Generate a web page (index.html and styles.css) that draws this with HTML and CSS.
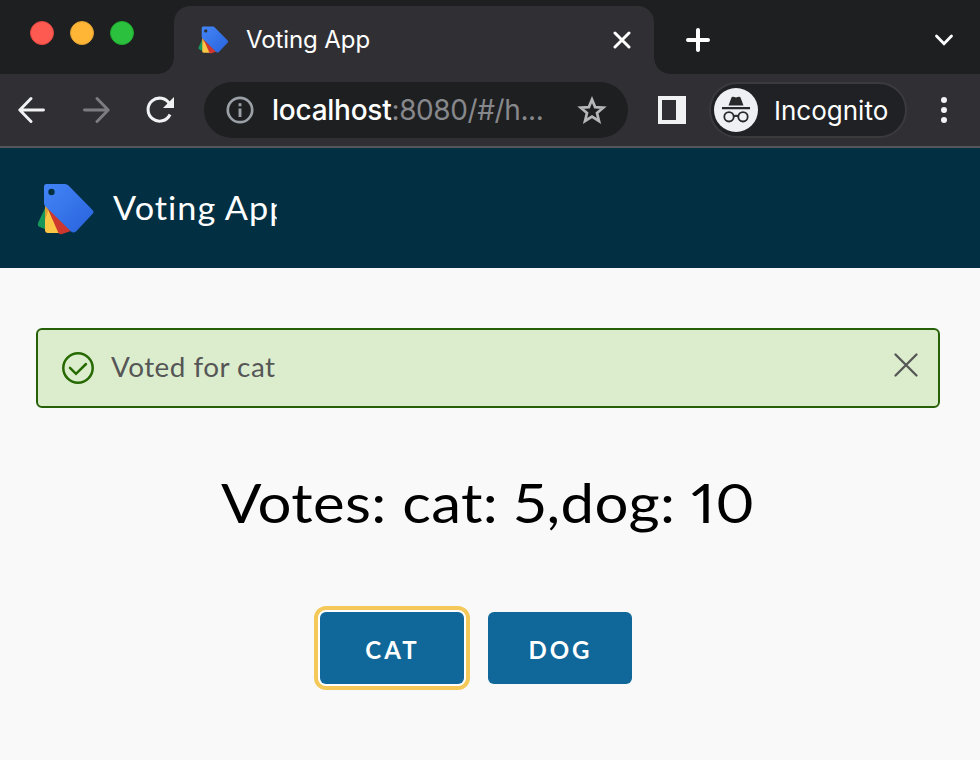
FILE: index.html
```html
<!DOCTYPE html>
<html lang="en">
<head>
<meta charset="utf-8">
<title>Voting App</title>
<link rel="stylesheet" href="styles.css">
</head>
<body>
<svg class="defs" width="0" height="0">
  <defs>
    <linearGradient id="blue" x1="0" y1="0" x2="1" y2="1"><stop offset="0" stop-color="#4285f7"/><stop offset="1" stop-color="#2962dc"/></linearGradient>
    <symbol id="tags" viewBox="0 0 58 54">
      <path fill="#17975a" d="M9 23 1 40q-1 3 2 4l7 3z"/>
      <path fill="#fbc545" d="M8 23v24q0 3 3 3h15L10 24z"/>
      <path fill="#d9a036" d="M8 23v14l4-12z"/>
      <path fill="#cd372e" d="m10 24 11 25q1 3 4 2l9-3z"/>
      <path fill="url(#blue)" fill-rule="evenodd" d="M9.500 1H28q2 0 3.500 1.500L55.500 27q2 2 0 4L39 48.500q-2.500 2-5 0L8 23q-1-1-1-3V4q0-3 2.500-3zM14.500 5.800a3.200 3.200 0 1 0 0 6.400 3.200 3.200 0 0 0 0-6.400z"/>
    </symbol>
  </defs>
</svg>
<div class="tabs">
  <div class="lights"><i class="red"></i><i class="amber"></i><i class="green"></i></div>
  <div class="tab">
    <svg class="favicon" width="31" height="29"><use href="#tags"/></svg>
    <span class="tab-title">Voting App</span>
    <svg class="tab-close" width="18" height="18" viewBox="0 0 18 18"><path d="m2 2 14 14M16 2 2 16" stroke="#fff" stroke-width="3" stroke-linecap="round"/></svg>
  </div>
  <svg class="plus" width="24" height="24" viewBox="0 0 24 24"><path d="M12 2v20M2 12h20" stroke="#fff" stroke-width="4" stroke-linecap="round"/></svg>
  <svg class="chevron" width="20" height="12" viewBox="0 0 20 12"><path d="m2.500 2 7.500 7.700L17.500 2" fill="none" stroke="#fff" stroke-width="2.800" stroke-linecap="round"/></svg>
</div>
<div class="toolbar">
  <svg class="back" width="28" height="28" viewBox="0 0 28 28"><path d="M25.500 14H2.500M13 2.500 1.800 14 13 25.500" fill="none" stroke="#f1f2f4" stroke-width="2.900" stroke-linecap="round" stroke-linejoin="round"/></svg>
  <svg class="forward" width="28" height="28" viewBox="0 0 28 28"><path d="M2.500 14h23M15 2.500 26.200 14 15 25.500" fill="none" stroke="#7c7c81" stroke-width="2.900" stroke-linecap="round" stroke-linejoin="round"/></svg>
  <svg class="reload" width="28" height="28" viewBox="0 0 28 28"><path d="M23.700 8.200A11.500 11.500 0 1 0 24 18.500" fill="none" stroke="#f1f2f4" stroke-width="3"/><path d="M28 1v11H17z" fill="#f1f2f4"/></svg>
  <div class="address">
    <svg width="28" height="28" viewBox="0 0 28 28"><circle cx="14" cy="14" r="12.200" fill="none" stroke="#9aa0a6" stroke-width="2.700"/><path d="M14 12.500V21M14 7.200v3" stroke="#9aa0a6" stroke-width="2.900"/></svg>
    <span class="url"><b>localhost</b><span>:8080/#/h...</span></span>
    <svg class="star" width="30" height="29" viewBox="0 0 30 29"><path d="m15 3.500 3.100 7.600 8.200.6-6.300 5.300 2 8-7-4.400L8 25l2-8-6.300-5.300 8.200-.6z" fill="none" stroke="#b7b7b9" stroke-width="2.700"/></svg>
  </div>
  <svg class="panel" width="28" height="28" viewBox="0 0 28 28"><path fill="#f1f2f4" fill-rule="evenodd" d="M0 0h28v28H0zM4 4v20h14V4z"/></svg>
  <div class="incognito">
    <svg width="44" height="44" viewBox="0 0 44 44"><circle cx="22" cy="22" r="22" fill="#eff0f4"/><path fill="#29292c" d="m14.500 17.500 3-8q.5-1 1.800-.7l2.700.7 2.700-.7q1.300-.3 1.800.7l3 8zM8 19h28v2.200H8z"/><g fill="none" stroke="#29292c" stroke-width="1.800"><circle cx="15" cy="28.800" r="4.700"/><circle cx="29" cy="28.800" r="4.700"/><path d="M19.700 28.500q2.300-1.500 4.600 0"/></g></svg>
    <span>Incognito</span>
  </div>
  <svg class="dots" width="6" height="28" viewBox="0 0 6 28" fill="#f1f2f4"><circle cx="3" cy="4" r="3"/><circle cx="3" cy="14" r="3"/><circle cx="3" cy="24" r="3"/></svg>
</div>
<header class="header">
  <svg class="logo" width="58" height="54"><use href="#tags"/></svg>
  <span class="brand">Voting App</span>
</header>
<main>
  <div class="alert">
    <svg width="32" height="32" viewBox="0 0 32 32" fill="none" stroke="#266900" stroke-width="2.500"><circle cx="16" cy="16" r="14.700"/><path d="m8 15.800 6 6 10-9.800" stroke-linecap="round"/></svg>
    <span class="alert-text">Voted for cat</span>
    <svg class="dismiss" width="26" height="26" viewBox="0 0 26 26"><path d="m2.500 2.500 21 21M23.500 2.500l-21 21" stroke="#565656" stroke-width="2.300" stroke-linecap="round"/></svg>
  </div>
  <h1>Votes: cat: 5,dog: 10</h1>
  <div class="buttons"><button class="focused">CAT</button><button>DOG</button></div>
</main>
</body>
</html>
```
FILE: styles.css
```css
* { box-sizing: border-box; }
body { margin: 0; width: 980px; height: 760px; overflow: hidden; background: #f9f9f9; font-family: Lato, sans-serif; }
svg { display: block; flex: none; }
.defs { position: absolute; }
.tabs { height: 74px; background: #1e1f21; display: flex; align-items: flex-start; font-family: Inter, sans-serif; }
.lights { display: flex; gap: 16px; width: 174px; padding: 21px 0 0 30px; }
.lights i { width: 24px; height: 24px; border-radius: 50%; }
.red { background: #ff5a52; border: 1px solid #e2463f; }
.amber { background: #ffb536; border: 1px solid #dfa033; }
.green { background: #2bc13e; border: 1px solid #1fab2d; }
.tab { position: relative; width: 480px; height: 68px; margin-top: 6px; padding: 0 23px 0 24px; display: flex; align-items: center; background: #303034; border-radius: 16px 16px 0 0; color: #fff; }
.tab::before, .tab::after { content: ""; position: absolute; bottom: 0; width: 16px; height: 16px; }
.tab::before { left: -16px; background: radial-gradient(circle at 0 0, transparent 15.5px, #303034 16px); }
.tab::after { right: -16px; background: radial-gradient(circle at 100% 0, transparent 15.5px, #303034 16px); }
.tab-title { margin: -2px 0 0 17px; font-size: 24px; white-space: nowrap; letter-spacing: -0.1px; }
.favicon { margin-top: 1px; }
.tab-close { margin-left: auto; }
.plus { margin: 28px 0 0 32px; }
.chevron { margin: 34px 26px 0 auto; }
.toolbar { height: 74px; background: #303034; border-bottom: 2px solid #545659; display: flex; align-items: center; padding-left: 18px; font-family: Inter, sans-serif; }
.forward { margin-left: 36px; }
.reload { margin-left: 36px; }
.address { width: 424px; height: 56px; margin-left: 30px; padding: 0 21px 0 22px; border-radius: 28px; background: #1e1f21; display: flex; align-items: center; }
.url { margin-left: 18px; font-size: 28px; color: #87888b; white-space: nowrap; letter-spacing: -0.4px; }
.url b { font-weight: 500; color: #fff; letter-spacing: -0.25px; }
.star { margin-left: auto; }
.panel { margin-left: 30px; }
.incognito { width: 198px; height: 56px; margin-left: 23px; padding-left: 3px; border: 2px solid #3b3b3e; border-radius: 28px; background: #202124; display: flex; align-items: center; color: #fff; font-size: 26px; }
.incognito span { margin-left: 16px; white-space: nowrap; }
.dots { margin-left: 34px; }
.header { height: 120px; background: #022f42; padding-left: 37px; display: flex; align-items: center; color: #fff; }
.logo { margin-top: 3px; }
.brand { width: 153px; margin: -1px 0 0 18px; overflow: hidden; white-space: nowrap; font-size: 32px; letter-spacing: 0.95px; transform: scaleX(1.07); transform-origin: left; }
main { padding: 60px 40px 0 36px; }
.alert { height: 80px; padding: 0 19px 0 24px; border: 2px solid #266108; border-radius: 6px; background: #dbedcd; display: flex; align-items: center; color: #565656; font-size: 26px; }
.alert-text { margin: -2px 0 0 17px; letter-spacing: 0.45px; white-space: nowrap; transform: scaleX(1.07); transform-origin: left; }
.dismiss { margin: -6px 0 0 auto; }
h1 { margin: 58px 0 0; height: 72px; line-height: 72px; text-align: center; font-size: 55px; font-weight: 400; color: #000; white-space: nowrap; font-feature-settings: "pnum"; letter-spacing: 0.3px; transform: scaleX(1.09); }
.buttons { margin-top: 74px; padding-left: 284px; display: flex; gap: 24px; }
button { width: 144px; height: 72px; padding: 3px 0 0 1px; border: 0; border-radius: 6px; background: #0f679a; color: #fff; font: 700 24px Lato, sans-serif; letter-spacing: 3px; }
.focused { outline: 4px solid #f4c95a; outline-offset: 2px; box-shadow: 0 0 0 2px #fff; }
```
